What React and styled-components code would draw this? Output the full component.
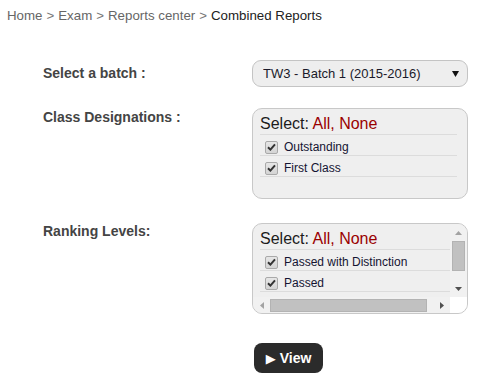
import React from "react";
import styled, { createGlobalStyle } from "styled-components";

const Global = createGlobalStyle`
  html, body { margin: 0; padding: 0; background: #fff; }
  body { font-family: "Liberation Sans", Arial, sans-serif; }
`;

const Page = styled.div`
  width: 488px;
  height: 386px;
  overflow: hidden;
`;

const Crumbs = styled.nav`
  padding: 8px 0 0 7px;
  font-size: 13.3px;
  line-height: 16px;
  color: #666;
`;

const Crumb = styled.span`
  color: ${(p) => (p.$current ? "#222" : "#666")};
`;

const Sep = styled.span`
  color: #777;
  margin: 0 4px;
`;

const Form = styled.div`
  padding-left: 43px;
  margin-top: 36px;
`;

const Row = styled.div`
  display: grid;
  grid-template-columns: 209px 216px;
  align-items: ${(p) => (p.$center ? "center" : "start")};
  margin-top: ${(p) => p.$mt || 0}px;
`;

const Label = styled.div`
  font-size: 14px;
  font-weight: bold;
  line-height: 17px;
  color: #444;
  padding-top: ${(p) => p.$pt || 0}px;
`;

const Select = styled.select`
  appearance: none;
  -webkit-appearance: none;
  box-sizing: border-box;
  width: 216px;
  height: 27px;
  border: 1px solid #c4c4c4;
  border-radius: 9px;
  background-color: #eeeeee;
  background-image: url("data:image/svg+xml;utf8,<svg xmlns='http://www.w3.org/2000/svg' width='7' height='6'><polygon points='0,0 7,0 3.5,6' fill='%23111'/></svg>");
  background-repeat: no-repeat;
  background-position: right 8px center;
  padding: 0 20px 0 10px;
  font-family: "Liberation Sans", Arial, sans-serif;
  font-size: 13px;
  color: #1a1a2a;
  outline: none;
`;

const Box = styled.div`
  box-sizing: border-box;
  width: 216px;
  height: 91px;
  border: 1px solid #c8c8c8;
  border-radius: 10px;
  background: #efefef;
  overflow: hidden;
`;

const ScrollBox = styled(Box)`
  display: grid;
  grid-template-columns: 197px 17px;
  grid-template-rows: 73px 16px;
`;

const Viewport = styled.div`
  overflow: hidden;
`;

const VBar = styled.div`
  display: flex;
  flex-direction: column;
  background: #f1f1f1;
`;

const HBar = styled.div`
  display: flex;
  background: #f1f1f1;
`;

const Corner = styled.div`
  background: #ffffff;
`;

const ArrowBtn = styled.div`
  flex: none;
  width: 17px;
  height: ${(p) => (p.$h ? 16 : 17)}px;
  display: flex;
  align-items: center;
  justify-content: center;
`;

const VTrack = styled.div`
  flex: 1;
  display: flex;
  justify-content: center;
`;

const HTrack = styled.div`
  flex: 1;
  display: flex;
  align-items: center;
`;

const VThumb = styled.div`
  box-sizing: border-box;
  width: 13px;
  height: 30px;
  background: #c1c1c1;
  border: 1px solid #b3b3b3;
`;

const HThumb = styled.div`
  box-sizing: border-box;
  height: 13px;
  width: 157px;
  background: #c1c1c1;
  border: 1px solid #b3b3b3;
`;

const Tri = ({ dir, color }) => {
  const pts = {
    up: "0,4 7,4 3.5,0",
    down: "0,0 7,0 3.5,4",
    left: "4,0 4,7 0,3.5",
    right: "0,0 0,7 4,3.5",
  }[dir];
  const v = dir === "up" || dir === "down";
  return (
    <svg width={v ? 7 : 4} height={v ? 4 : 7} viewBox={v ? "0 0 7 4" : "0 0 4 7"}>
      <polygon points={pts} fill={color} />
    </svg>
  );
};

const Inner = styled.div`
  box-sizing: border-box;
  padding: 4px ${(p) => (p.$scroll ? 0 : 10)}px 6px 7px;
  width: ${(p) => (p.$scroll ? "205px" : "auto")};
`;

const Head = styled.div`
  font-size: 16px;
  line-height: 21px;
  color: #1c1c1c;
  border-bottom: 1px solid #dcdcdc;
  white-space: nowrap;
`;

const Red = styled.span`
  color: #9a0000;
`;

const Item = styled.label`
  display: flex;
  align-items: center;
  height: 16px;
  padding: 4px 0 0 5px;
  line-height: 16px;
  border-bottom: 1px solid #dcdcdc;
  font-size: 12px;
  color: #141432;
  white-space: nowrap;
`;

const Check = styled.span`
  box-sizing: border-box;
  width: 13px;
  height: 13px;
  margin-right: 6px;
  border: 1px solid #a9a9a9;
  border-radius: 2px;
  background: linear-gradient(#e6e6e6, #d4d4d4);
  display: flex;
  align-items: center;
  justify-content: center;
  flex: none;
`;

const CheckMark = () => (
  <svg width="9" height="8" viewBox="0 0 9 8">
    <path d="M1 4.2 L3.4 6.6 L8 1.4" fill="none" stroke="#333" strokeWidth="2" />
  </svg>
);

const Option = ({ label, checked }) => (
  <Item aria-label={label ? undefined : "Failed"}>
    <Check>{checked && <CheckMark />}</Check>
    {label}
  </Item>
);

const ViewButton = styled.button`
  margin-left: 2px;
  width: 69px;
  height: 30px;
  border: none;
  border-radius: 8px;
  background: #2b2b2b;
  color: #fff;
  font-family: "Liberation Sans", Arial, sans-serif;
  font-size: 14px;
  font-weight: bold;
  padding: 0;
  display: flex;
  align-items: center;
  justify-content: center;
  gap: 4px;
`;

const Play = styled.span`
  font-family: "DejaVu Sans", sans-serif;
  font-size: 13px;
`;

export default function App() {
  return (
    <Page>
      <Global />
      <Crumbs>
        <Crumb>Home</Crumb>
        <Sep>&gt;</Sep>
        <Crumb>Exam</Crumb>
        <Sep>&gt;</Sep>
        <Crumb>Reports center</Crumb>
        <Sep>&gt;</Sep>
        <Crumb $current>Combined Reports</Crumb>
      </Crumbs>
      <Form>
        <Row $center>
          <Label>Select a batch :</Label>
          <Select defaultValue="tw3">
            <option value="tw3">TW3 - Batch 1 (2015-2016)</option>
          </Select>
        </Row>
        <Row $mt={21}>
          <Label $pt={1}>Class Designations :</Label>
          <Box>
            <Inner>
              <Head>
                Select: <Red>All, None</Red>
              </Head>
              <Option label="Outstanding" checked />
              <Option label="First Class" checked />
            </Inner>
          </Box>
        </Row>
        <Row $mt={24}>
          <Label $pt={0}>Ranking Levels:</Label>
          <ScrollBox>
            <Viewport>
              <Inner $scroll>
                <Head>
                  Select: <Red>All, None</Red>
                </Head>
                <Option label="Passed with Distinction" checked />
                <Option label="Passed" checked />
                <Option label="" />
              </Inner>
            </Viewport>
            <VBar>
              <ArrowBtn>
                <Tri dir="up" color="#a3a3a3" />
              </ArrowBtn>
              <VTrack>
                <VThumb />
              </VTrack>
              <ArrowBtn>
                <Tri dir="down" color="#505050" />
              </ArrowBtn>
            </VBar>
            <HBar>
              <ArrowBtn $h>
                <Tri dir="left" color="#a3a3a3" />
              </ArrowBtn>
              <HTrack>
                <HThumb />
              </HTrack>
              <ArrowBtn $h>
                <Tri dir="right" color="#505050" />
              </ArrowBtn>
            </HBar>
            <Corner />
          </ScrollBox>
        </Row>
        <Row $mt={29}>
          <div />
          <ViewButton>
            <Play>▶</Play>View
          </ViewButton>
        </Row>
      </Form>
    </Page>
  );
}
